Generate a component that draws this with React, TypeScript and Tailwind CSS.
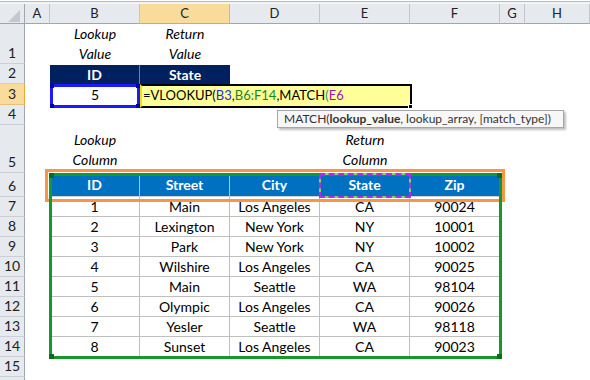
import React from "react"

const COLS = ["w-[25px]", "w-[90px]", "w-[90px]", "w-[90px]", "w-[90px]", "w-[90px]", "w-[25px]", "w-[65px]"]
const LETTERS = ["A", "B", "C", "D", "E", "F", "G", "H"]

const DATA = [
  ["1", "Main", "Los Angeles", "CA", "90024"],
  ["2", "Lexington", "New York", "NY", "10001"],
  ["3", "Park", "New York", "NY", "10002"],
  ["4", "Wilshire", "Los Angeles", "CA", "90025"],
  ["5", "Main", "Seattle", "WA", "98104"],
  ["6", "Olympic", "Los Angeles", "CA", "90026"],
  ["7", "Yesler", "Seattle", "WA", "98118"],
  ["8", "Sunset", "Los Angeles", "CA", "90023"],
]

function RowHead({ n, sel }: { n: string; sel?: boolean }) {
  return (
    <div
      className={`w-[25px] shrink-0 flex items-end justify-center leading-[20px] border-r border-b text-[#222] ${
        sel ? "bg-[#f9dc9c] border-r-[#e8a93c] border-b-[#e7c07a]" : "bg-[#e6e9ee] border-r-[#9ea6b0] border-b-[#cbd0d7]"
      }`}
    >
      {n}
    </div>
  )
}

function Row({ h, n, sel, children }: { h: string; n: string; sel?: boolean; children?: React.ReactNode }) {
  return (
    <div className={`flex ${h}`}>
      <RowHead n={n} sel={sel} />
      {children}
    </div>
  )
}

function Empty({ i }: { i: number }) {
  return <div className={`${COLS[i]} shrink-0`} />
}

function Note({ a, b }: { a: string; b: string }) {
  return (
    <div className="w-[90px] shrink-0 flex flex-col justify-end items-center italic leading-[20px]">
      <span>{a}</span>
      <span>{b}</span>
    </div>
  )
}

export default function App() {
  return (
    <div className="relative w-[590px] h-[380px] overflow-hidden bg-white text-black text-[14px] font-['Lato','Liberation_Sans',sans-serif]">
      {/* top strip */}
      <div className="h-[4px] border-t border-t-white">
        <div className="h-[3px] border-t border-t-[#b4bac2] bg-[#f2f3f5]" />
      </div>

      {/* column headers */}
      <div className="flex h-[20px] text-[13px] text-[#222]">
        <div className="w-[25px] shrink-0 relative bg-[#e6e9ee] border-r border-b border-[#9ea6b0]">
          <svg className="absolute left-[8px] top-[6px]" width="12" height="12" viewBox="0 0 12 12">
            <polygon points="12,0 12,12 0,12" fill="#c3c8cf" />
          </svg>
        </div>
        {LETTERS.map((l, i) => (
          <div
            key={l}
            className={`${COLS[i]} shrink-0 flex items-center justify-center border-r border-b ${
              l === "C" ? "bg-[#f9dc9c] border-r-[#e8b45a] border-b-[#e8a93c]" : "bg-[#e6e9ee] border-r-[#c0c6ce] border-b-[#9ea6b0]"
            }`}
          >
            {l}
          </div>
        ))}
      </div>

      <Row h="h-[40px]" n="1">
        <Empty i={0} />
        <Note a="Lookup" b="Value" />
        <Note a="Return" b="Value" />
        <Empty i={3} />
      </Row>

      <Row h="h-[20px]" n="2">
        <Empty i={0} />
        <div className="w-[90px] shrink-0 pt-[1px]">
          <div className="h-full bg-[#002060] text-white font-bold flex items-center justify-center border-r border-[#6f7f9f]">ID</div>
        </div>
        <div className="w-[90px] shrink-0 pt-[1px]">
          <div className="h-full bg-[#002060] text-white font-bold flex items-center justify-center">State</div>
        </div>
      </Row>

      <Row h="h-[21px]" n="3" sel>
        <Empty i={0} />
        <div className="w-[90px] shrink-0 flex items-center justify-center">5</div>
      </Row>

      <Row h="h-[20px]" n="4" />

      <Row h="h-[48px]" n="5">
        <Empty i={0} />
        <div className="w-[90px] shrink-0 flex flex-col justify-end items-center italic leading-[20px] pb-[3px]">
          <span>Lookup</span>
          <span>Column</span>
        </div>
        <Empty i={2} />
        <Empty i={3} />
        <div className="w-[90px] shrink-0 flex flex-col justify-end items-center italic leading-[20px] pb-[3px]">
          <span>Return</span>
          <span>Column</span>
        </div>
      </Row>

      <Row h="h-[24px]" n="6">
        <Empty i={0} />
        {["ID", "Street", "City", "State", "Zip"].map((t) => (
          <div
            key={t}
            className="w-[90px] shrink-0 bg-[#0070c0] text-white font-bold flex items-center justify-center border-r border-b border-r-[#a9c4dc] border-b-[#d0d0d0]"
          >
            {t}
          </div>
        ))}
      </Row>

      {DATA.map((r, k) => (
        <Row key={k} h="h-[20px]" n={String(7 + k)}>
          <Empty i={0} />
          {r.map((c, j) => (
            <div key={j} className="w-[90px] shrink-0 flex items-center justify-center border-r border-b border-[#bfbfbf]">
              {c}
            </div>
          ))}
        </Row>
      ))}

      <Row h="h-[20px]" n="15" />
      <Row h="h-[20px]" n="" />

      {/* B3 reference highlight */}
      <div className="absolute left-[50px] top-[84px] w-[90px] h-[24px] border-[3px] border-[#1a1aff]">
        <div className="absolute -left-[3px] -top-[3px] w-[4px] h-[4px] bg-[#0000b0]" />
        <div className="absolute -right-[3px] -top-[3px] w-[4px] h-[4px] bg-[#0000b0]" />
        <div className="absolute -left-[3px] -bottom-[3px] w-[4px] h-[4px] bg-[#0000b0]" />
        <div className="absolute -right-[3px] -bottom-[3px] w-[4px] h-[4px] bg-[#0000b0]" />
      </div>

      {/* in-cell editor */}
      <div className="absolute left-[140px] top-[84px] w-[272px] h-[24px] bg-[#ffff99] border-2 border-black border-l-[#f2e200] flex items-center pl-[1px] text-[13px] whitespace-nowrap">
        <span>=VLOOKUP(</span>
        <span className="text-[#2b2bd9]">B3</span>
        <span>,</span>
        <span className="text-[#13891f]">B6:F14</span>
        <span>,MATCH</span>
        <span className="text-[#1f9a5a]">(</span>
        <span className="text-[#9b14c8]">E6</span>
        <div className="absolute -right-[3px] -bottom-[3px] w-[5px] h-[5px] bg-black border border-white" />
      </div>

      {/* function tooltip */}
      <div className="absolute left-[277px] top-[110px] w-[287px] h-[18px] bg-[#f7f7f7] border border-[#a6a6a6] shadow-[2px_2px_2px_rgba(0,0,0,0.25)] flex items-center pl-[6px] text-[12px] text-[#333] whitespace-nowrap">
        <span>MATCH(</span>
        <span className="font-bold">lookup_value</span>
        <span className="whitespace-pre">, lookup_array, [match_type])</span>
      </div>

      {/* orange header outline */}
      <div className="absolute left-[45px] top-[169px] w-[460px] h-[33px] border-[3px] border-[#f79646]" />

      {/* green range */}
      <div className="absolute left-[49px] top-[173px] w-[453px] h-[186px] border-[3px] border-[#16982c]">
        <div className="absolute -left-[3px] -top-[3px] w-[5px] h-[5px] bg-[#0c6b1c]" />
        <div className="absolute -right-[3px] -top-[3px] w-[5px] h-[5px] bg-[#0c6b1c]" />
        <div className="absolute -left-[3px] -bottom-[3px] w-[5px] h-[5px] bg-[#0c6b1c]" />
        <div className="absolute -right-[3px] -bottom-[3px] w-[5px] h-[5px] bg-[#0c6b1c]" />
      </div>

      {/* E6 marching ants */}
      <div className="absolute left-[319px] top-[173px] w-[92px] h-[25px] border-2 border-[#7ddc4a]">
        <div className="absolute -inset-[2px] border-2 border-dashed border-[#b02ee0]" />
      </div>
    </div>
  )
}
